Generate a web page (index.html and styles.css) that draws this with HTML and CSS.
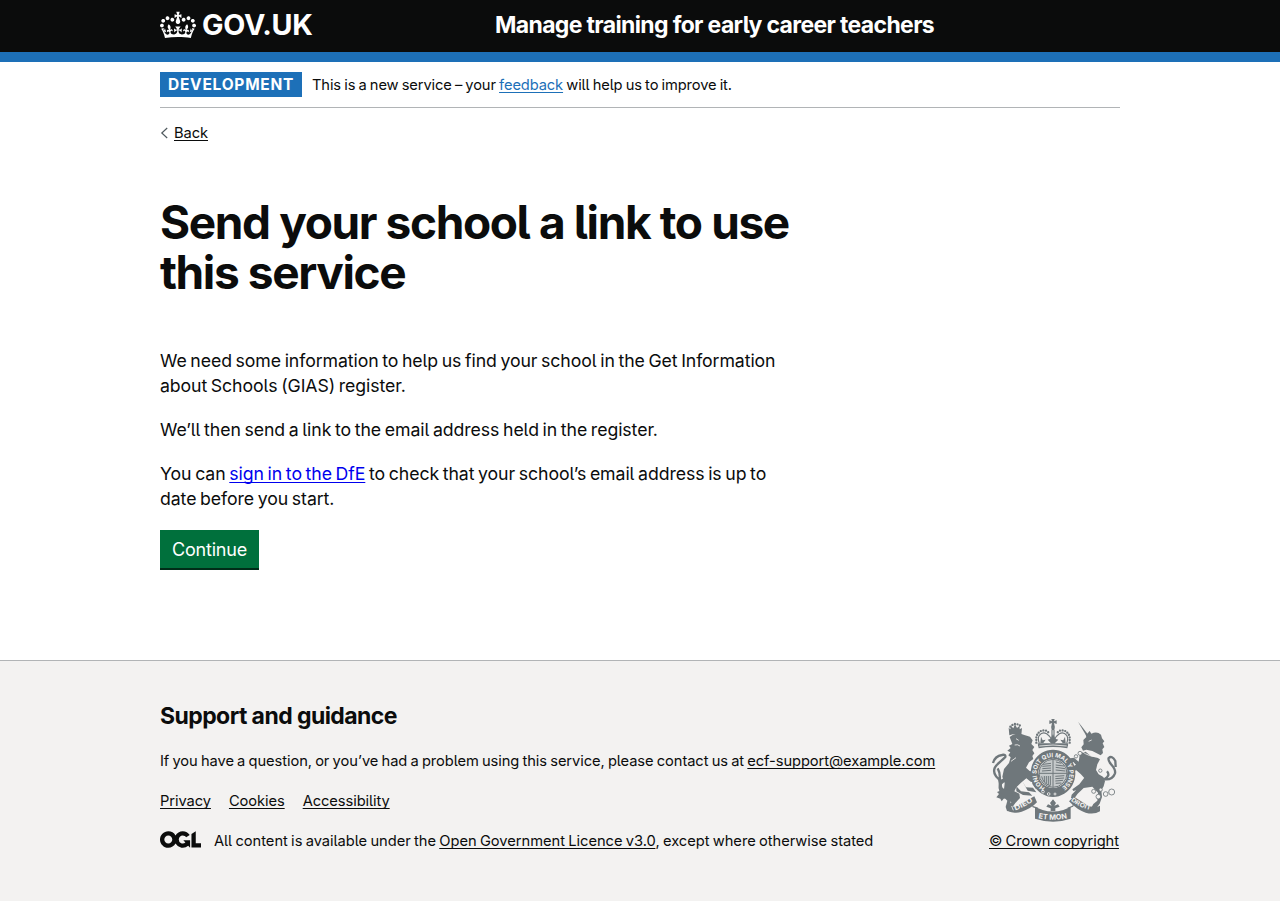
FILE: index.html
```html
<!DOCTYPE html>
<html lang="en">
<head>
<meta charset="utf-8">
<title>Manage training for early career teachers</title>
<link rel="stylesheet" href="styles.css">
</head>
<body>
<header class="header">
  <div class="container header-row">
    <a class="logo" href="#">
      <svg class="crown" viewBox="0 0 132 97" width="36" height="32" aria-hidden="true"><path fill="currentColor" fill-rule="evenodd" d="M25 30.2c3.5 1.5 7.7-.2 9.1-3.7 1.5-3.6-.2-7.8-3.9-9.2-3.6-1.4-7.6.3-9.1 3.9-1.4 3.5.3 7.5 3.9 9zM9 39.5c3.6 1.5 7.8-.2 9.2-3.7 1.5-3.6-.2-7.8-3.9-9.1-3.6-1.5-7.6.2-9.1 3.8-1.4 3.5.3 7.5 3.8 9zM4.4 57.2c3.5 1.5 7.7-.2 9.1-3.8 1.5-3.6-.2-7.7-3.9-9.1-3.5-1.5-7.6.3-9.1 3.8-1.4 3.5.3 7.6 3.9 9.1zm38.3-21.4c3.5 1.5 7.7-.2 9.1-3.8 1.5-3.6-.2-7.7-3.9-9.1-3.6-1.5-7.6.3-9.1 3.8-1.3 3.6.4 7.7 3.9 9.1zm64.4-5.6c-3.6 1.5-7.8-.2-9.1-3.7-1.5-3.6.2-7.8 3.8-9.2 3.6-1.4 7.7.3 9.2 3.9 1.3 3.5-.4 7.5-3.9 9zm15.9 9.3c-3.6 1.5-7.7-.2-9.1-3.7-1.5-3.6.2-7.8 3.7-9.1 3.6-1.5 7.7.2 9.2 3.8 1.5 3.5-.3 7.5-3.8 9zm4.7 17.7c-3.6 1.5-7.8-.2-9.2-3.8-1.5-3.6.2-7.7 3.9-9.1 3.6-1.5 7.7.3 9.2 3.8 1.3 3.5-.4 7.6-3.9 9.1zM89.3 35.8c-3.6 1.5-7.8-.2-9.2-3.8-1.4-3.6.2-7.7 3.9-9.1 3.6-1.5 7.7.3 9.2 3.8 1.4 3.6-.3 7.7-3.9 9.1zM69.7 17.7l8.9 4.7V9.3l-8.9 2.8c-.2-.3-.5-.6-.9-.9L72.4 0H59.6l3.5 11.2c-.3.3-.6.5-.9.9l-8.8-2.8v13.1l8.8-4.7c.3.3.6.7.9.9l-5 15.4v.1c-.2.8-.4 1.6-.4 2.4 0 4.1 3.1 7.5 7 8.1h.2c.3 0 .7.1 1 .1.4 0 .7 0 1-.1h.2c4-.6 7.1-4.1 7.1-8.1 0-.8-.1-1.7-.4-2.4V34l-5.1-15.4c.4-.2.7-.6 1-.9zM66 92.8c16.9 0 32.8 1.1 47.1 3.2 4-16.9 8.9-26.7 14-33.5l-9.6-3.4c1 4.9 1.1 7.2 0 10.2-1.5-1.4-3-4.3-4.2-8.7L108.6 76c2.8-2 5-3.2 7.5-3.3-4.4 9.4-10 11.9-13.6 11.2-4.3-.8-6.3-4.6-5.6-7.9 1-4.7 5.7-5.9 8-.5 4.3-8.7-3-11.4-7.6-8.8 7.1-7.2 7.9-13.5 2.1-21.1-8 6.1-8.1 12.3-4.5 20.8-4.7-5.4-12.1-2.5-9.5 6.2 3.4-5.2 7.9-2 7.2 3.1-.6 4.3-6.4 7.8-13.5 7.2-10.3-.9-10.9-8-11.2-13.8 2.5-.5 7.1 1.8 11 7.3L80.2 60c-4.1 4.4-8 5.3-12.3 5.4 1.4-4.4 8-11.6 8-11.6H55.5s6.4 7.2 7.9 11.6c-4.2-.1-8-1-12.3-5.4l1.4 16.4c3.9-5.5 8.5-7.7 10.9-7.3-.3 5.8-.9 12.8-11.1 13.8-7.2.6-12.9-2.9-13.5-7.2-.7-5 3.8-8.3 7.1-3.1 2.7-8.7-4.6-11.6-9.4-6.2 3.7-8.5 3.6-14.7-4.6-20.8-5.8 7.6-5 13.9 2.2 21.1-4.7-2.6-11.9.1-7.7 8.8 2.3-5.5 7.1-4.2 8.1.5.7 3.3-1.3 7.1-5.7 7.9-3.5.7-9-1.8-13.5-11.2 2.5.1 4.7 1.3 7.5 3.3l-4.7-15.4c-1.2 4.4-2.7 7.2-4.3 8.7-1.1-3-.9-5.3 0-10.2l-9.5 3.4c5 6.9 9.9 16.7 14 33.5 14.8-2.1 30.8-3.2 47.7-3.2z"/></svg>
      <span class="logo-text">GOV.UK</span>
    </a>
    <a class="service-name" href="#">Manage training for early career teachers</a>
  </div>
</header>

<div class="container">
  <div class="phase-banner">
    <strong class="tag">DEVELOPMENT</strong>
    <span class="phase-text">This is a new service – your <a class="link-blue" href="#">feedback</a> will help us to improve it.</span>
  </div>
  <a class="back" href="#"><svg width="8" height="12" viewBox="0 0 8 12" aria-hidden="true"><path d="M7.2 1L1.8 6l5.4 5" fill="none" stroke="#505a5f" stroke-width="1.2"/></svg><span class="back-text">Back</span></a>
  <main class="main">
    <h1 class="title">Send your school a link to use<br>this service</h1>
    <p class="body body-first">We need some information to help us find your school in the Get Information<br>about Schools (GIAS) register.</p>
    <p class="body">We’ll then send a link to the email address held in the register.</p>
    <p class="body">You can <a class="link-default" href="#">sign in to the DfE</a> to check that your school’s email address is up to<br>date before you start.</p>
    <button class="button">Continue</button>
  </main>
</div>

<footer class="footer">
  <div class="container footer-row">
    <div class="footer-main">
      <h2 class="footer-title">Support and guidance</h2>
      <p class="support">If you have a question, or you’ve had a problem using this service, please contact us at <a class="link-dark" href="#">ecf-support@example.com</a></p>
      <ul class="links">
        <li><a class="link-dark" href="#">Privacy</a></li>
        <li><a class="link-dark" href="#">Cookies</a></li>
        <li><a class="link-dark" href="#">Accessibility</a></li>
      </ul>
      <div class="licence">
        <svg width="41" height="17" viewBox="0 0 483.2 195.7" aria-hidden="true"><path fill="currentColor" d="M421.5 142.8V.1l-50.7 32.3v161.1h112.4v-50.7zm-122.3-9.6A47.12 47.12 0 0 1 221 97.8c0-26 21.1-47.1 47.1-47.1 16.7 0 31.4 8.7 39.7 21.8l42.7-27.2A97.63 97.63 0 0 0 268.1 0c-36.5 0-68.3 20.1-85.1 49.7A98 98 0 0 0 97.8 0C43.9 0 0 43.9 0 97.8s43.9 97.8 97.8 97.8c36.5 0 68.3-20.1 85.1-49.7a97.76 97.76 0 0 0 149.6 25.4l19.4 22.2h3v-87.8h-80l24.3 27.5zM97.8 145c-26 0-47.1-21.1-47.1-47.1s21.1-47.1 47.1-47.1 47.1 21.1 47.1 47.1S123.8 145 97.8 145"/></svg>
        <span>All content is available under the <a class="link-dark" href="#">Open Government Licence v3.0</a>, except where otherwise stated</span>
      </div>
    </div>
    <a class="crest-link" href="#">
      <svg class="crest" width="131" height="105" viewBox="12 21 393 315" aria-hidden="true">
        <defs>
          <path id="garter" d="M180 233A49 49 0 1 1 228 233"/>
          <path id="dieu" d="M91 301Q121 290 149 270"/>
          <path id="etmon" d="M160 325Q204 334 249 324"/>
          <path id="droit" d="M257 272Q286 294 322 302"/>
        </defs>
        <g class="ink">
          <!-- lion: crown, mane, body and legs -->
          <path d="M71 53l5 5 2-10 7 7 5-12 6 11 8-7 0 11 7-4-2 21q-16-7-36 1z"/>
          <path d="M74 81l10-7q18-6 34 1l17 5 8 11-4 11 9 9-6 9 6 10-6 8 3 9-13 10-9 16 11 10 20 4-3 6 5 7-9 4 6 14-16-3-13-10-16 13-14 14-6 12 15 7 2 13-14 15-10 14 17 2 5 6-27 3-10-5 13-22-14-12-9 1-6 8-4-8-12-4 8-10-6-6 21-8 2-18-7-20 5-23 15-18 5-17-7-6 6-9-9-5 10-8-5-7 10-5z"/>
          <path d="M94 229l14 15 24 3 10 10-28-2-20-11zM113 215l10 17 21 1 10 14-26-5z"/>
          <path d="M54 253q-16-7-13-32l-2-17 10 5 7-5 5 10-10 9q-2 14 11 14l14 6 9 15-9 18 6 15 11 7-12 8-15-3-4-12 5-19-14-14z"/>
          <path d="M142 190l12-6 10 14-8 12 4 18-8 8-10-14z"/>
          <!-- unicorn: horn, head, body and legs -->
          <path d="M279 35l8 10 26 34-7 2z"/>
          <path d="M306 72l8-9 5 8q17-9 29 3l3 11 7 9-5 6 5 11-6 7 2 11-7 7-25-13-18-4-10 3-5-10 7-9-1-13 9-9-2-8z"/>
          <path d="M285 129l17-4 16 14 19 4 8 5-8 15-4 17 8 13 14 8 5 13-4 15-7 12 2 20-7 20-10 14-15-2 6-11 12-10 2-24-17-18-26 4-18 17-12 17-8-4 2-10 23-24 18-13-1-11-13-14-13-11-16 5-2 15-10-5 3-18 24-14-8-8-18 4-8-9 6-5 22-3 14 12z"/>
          <path d="M262 238l21-15 16-21 9 14-18 20-25 7z"/>
          <!-- motto ribbon -->
          <path d="M150 291l23 9q30 9 62 0l22-9v35q-52 18-107 0z"/>
          <path d="M62 287q16 9 39-2l47-26 8 18q-18 19-46 28-26 7-38-1z"/>
          <path d="M345 287q-16 9-39-2l-39-25-15 14q26 27 50 34 25 7 43-4z"/>
        </g>
        <g class="line">
          <path class="tail" d="M51 214Q21 196 29 174C34 162 49 154 61 141Q63 132 51 135Q30 138 24 159M44 214Q47 190 38 175"/>
          <path class="tail" d="M351 207Q382 213 390 190C395 169 365 160 371 144Q381 135 391 153L392 171M359 207Q377 197 366 184"/>
          <path d="M163 100Q157 84 163 76Q172 64 185 71Q196 78 200 90M245 100Q251 84 245 76Q236 64 223 71Q212 78 208 90M201 60V103M207 60V103M159 106H249"/>
          <path d="M151 272q-14 8-7 18l15 5M256 271q14 9 7 18l-15 6"/>
        </g>
        <g class="ink">
          <path d="M199 27h10l-2 7 8-3v11l-8-3 3 14h-12l3-14-8 3V31l8 3z"/>
          <circle cx="204" cy="56" r="5"/>
          <path d="M168 80l5 11 9-2-7 10h-9zM204 72l7 14 9 3-10 10h-13l-9-10 9-3zM240 80l-5 11-9-2 7 10h9z"/>
          <path d="M158 100h92l-3 15q-43-8-86 0z"/>
          <path fill-rule="evenodd" d="M204 119a67 71 0 1 0 .1 0zM204 146a44 44 0 1 1-.1 0z"/>
          <path d="M204 268l9 11-5 8 11-4 5 7-13 5v8h-14v-8l-13-5 5-7 11 4-5-8z"/>
        </g>
        <!-- quartered shield -->
        <g class="shield">
          <circle cx="204" cy="190" r="42"/>
          <path d="M204 148v84M162 190h84M174 163l24-3m-26 9l26-2m-26 9l26-2m-27 9l27-2M213 156l16 4m-17 5l25 3m-25 4l28 4m-28 4l29 3M211 199l27-2m-27 9l26-2m-26 9l23-2m-22 9l17-1M170 199q4 22 26 28M178 198v18m6-18v23m6-23v26M196 198v28"/>
        </g>
        <g class="halo"><circle cx="174" cy="245" r="4"/><circle cx="191" cy="252" r="4"/><circle cx="210" cy="252" r="3"/><path d="M290 123q20 18 53 18M93 86l8 5M89 105q9-3 16 3M311 94l9-4M80 288l5 13M78 154l15-11M163 108q41-6 82 0"/></g>
        <!-- crown beads and chain -->
        <g class="beads"><path d="M154 98V79Q164 57 184 62L194 70M254 98V79Q244 57 224 62L214 70M76 50Q91 34 109 50"/></g>
        <g class="rings"><circle cx="326" cy="244" r="6"/><circle cx="340" cy="260" r="7"/><circle cx="362" cy="252" r="7"/><circle cx="380" cy="246" r="9"/><circle cx="347" cy="239" r="5"/><circle cx="285" cy="130" r="6"/><circle cx="273" cy="139" r="5"/><circle cx="346" cy="182" r="5"/></g>
        <g class="motto">
          <text font-size="18"><textPath href="#garter" textLength="254" lengthAdjust="spacingAndGlyphs">HONI SOIT QUI MAL Y PENSE</textPath></text>
          <text font-size="18"><textPath href="#dieu" textLength="60" lengthAdjust="spacingAndGlyphs">DIEU</textPath></text>
          <text font-size="22"><textPath href="#etmon" textLength="87" lengthAdjust="spacingAndGlyphs">ET MON</textPath></text>
          <text font-size="18"><textPath href="#droit" textLength="66" lengthAdjust="spacingAndGlyphs">DROIT</textPath></text>
        </g>
      </svg>
      <span class="copyright">© Crown copyright</span>
    </a>
  </div>
</footer>
</body>
</html>
```
FILE: styles.css
```css
* { box-sizing: border-box; }

body {
  margin: 0;
  background: #fff;
  color: #0b0c0c;
  font-family: Inter, "Liberation Sans", sans-serif;
  font-feature-settings: "cv05";
  font-size: 14.7px;
  line-height: 20px;
  letter-spacing: -0.08px;
  word-spacing: -0.8px;
  white-space: nowrap;
}

a { color: inherit; text-decoration: none; }
h1, h2, p, ul { margin: 0; padding: 0; }

.container { width: 960px; margin: 0 auto; }

.header { height: 62px; background: #0b0c0c; border-bottom: 10px solid #1d70b8; color: #fff; }
.header-row { display: grid; grid-template-columns: 335px 1fr; height: 52px; padding-top: 9px; }
.logo { display: flex; gap: 6px; height: 32px; }
.logo-text { font-size: 28.7px; font-weight: 700; line-height: 32px; letter-spacing: -0.3px; }
.service-name { font-size: 23px; font-weight: 700; line-height: 32px; letter-spacing: -0.65px; word-spacing: 0; }

.phase-banner { display: flex; align-items: center; gap: 10px; height: 46px; border-bottom: 1px solid #b1b4b6; }
.phase-text { letter-spacing: -0.12px; }
.tag {
  width: 142px;
  height: 25px;
  padding-left: 8px;
  background: #1d70b8;
  color: #fff;
  font-size: 15.5px;
  font-weight: 700;
  line-height: 25px;
  letter-spacing: 0.75px;
}
.link-blue { color: #1d70b8; }
.link-default { color: #00e; }
.link-blue, .link-default, .link-dark, .back-text, .copyright {
  text-decoration: underline;
  text-decoration-thickness: 1px;
  text-underline-offset: 1.5px;
  text-decoration-skip-ink: none;
}

.back { display: flex; align-items: center; gap: 6px; width: max-content; height: 20px; margin-top: 15px; }

.main { height: 517px; padding-top: 54px; }
.title { margin-bottom: 51px; font-size: 46px; font-weight: 700; line-height: 50px; letter-spacing: -1.38px; word-spacing: 0; }
.body { margin-bottom: 19px; font-size: 17.7px; line-height: 25px; letter-spacing: -0.08px; word-spacing: -1.2px; }
.body-first { letter-spacing: -0.09px; }
.button {
  display: block;
  width: 99px;
  height: 38px;
  padding: 1px 0 0;
  border: 0;
  background: #00703c;
  box-shadow: 0 2px 0 #002d18;
  color: #fff;
  font: inherit;
  font-size: 18px;
  letter-spacing: -0.2px;
}

.footer { height: 241px; border-top: 1px solid #b1b4b6; background: #f3f2f1; }
.footer-row { display: flex; justify-content: space-between; }
.footer-main { padding-top: 40px; }
.footer-title { margin-bottom: 20px; font-size: 23px; font-weight: 700; line-height: 30px; letter-spacing: -0.57px; word-spacing: 0; }
.links { display: flex; gap: 18px; margin: 20px 0; list-style: none; }
.licence { display: flex; align-items: flex-start; gap: 13px; letter-spacing: -0.03px; }
.crest-link { display: flex; flex-direction: column; width: 131px; padding-top: 56px; gap: 9px; }

.crest { display: block; }
.ink { fill: #6f777b; }
.line { fill: none; stroke: #6f777b; stroke-width: 3.5; }
.tail { stroke-width: 7; }
.shield { fill: #c5c9ca; stroke: #6f777b; stroke-width: 3; }
.halo { fill: none; stroke: #f3f2f1; stroke-width: 2.5; }
.beads { fill: none; stroke: #6f777b; stroke-width: 7; stroke-linecap: round; stroke-dasharray: 0 8; }
.rings { fill: #f3f2f1; stroke: #6f777b; stroke-width: 2.5; }
.motto { fill: #f3f2f1; font-weight: 700; letter-spacing: 0; word-spacing: 0; }
```
